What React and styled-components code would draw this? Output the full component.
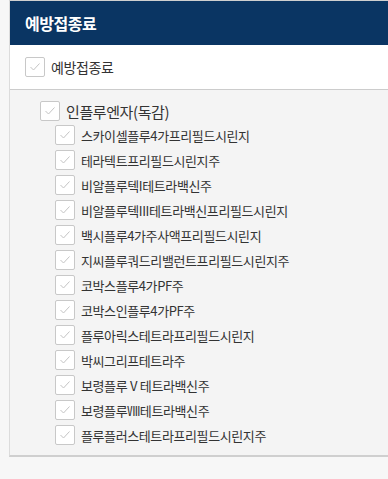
import React from 'react';
import styled, { createGlobalStyle } from 'styled-components';

const GlobalStyle = createGlobalStyle`
  html, body {
    margin: 0;
    padding: 0;
    background: #f7f7f7;
    font-family: "Noto Sans CJK KR", "Noto Sans", sans-serif;
  }
`;

const Page = styled.div`
  padding-left: 9px;
  padding-bottom: 20px;
`;

const Panel = styled.div`
  border-top: 1px solid #cfcfcf;
  border-left: 1px solid #dcdcdc;
  border-bottom: 2px solid #cfcfcf;
  background: #fff;
`;

const Header = styled.div`
  height: 44px;
  background: #0a3563;
  color: #fff;
  font-size: 16px;
  font-weight: 700;
  display: flex;
  align-items: center;
  padding-left: 15px;
  letter-spacing: -0.5px;
`;

const TopRow = styled.div`
  height: 44px;
  display: flex;
  align-items: center;
  padding-left: 15px;
  border-bottom: 1px solid #cccccc;
`;

const Tree = styled.div`
  background: #f4f4f4;
  padding: 11px 0 10px 30px;
  display: flex;
  flex-direction: column;
  gap: 4px;
`;

const Children = styled.div`
  display: flex;
  flex-direction: column;
  gap: 5px;
  padding-left: 15px;
`;

const Item = styled.label`
  display: flex;
  align-items: center;
  gap: 6px;
  height: 20px;
  color: #333;
  font-size: ${p => p.$size || 14}px;
  letter-spacing: -0.4px;
`;

const Box = styled.span`
  width: 18px;
  height: 18px;
  border: 1px solid #c8c8c8;
  border-radius: 2px;
  background: #fff;
  display: flex;
  align-items: center;
  justify-content: center;
  flex-shrink: 0;
`;

const Check = () => (
  <Box>
    <svg width="12" height="10" viewBox="0 0 12 10">
      <path d="M1.5 5 L4.5 8 L10.5 1.5" fill="none" stroke="#c4c4c4" strokeWidth="1" />
    </svg>
  </Box>
);

const vaccines = [
  '스카이셀플루4가프리필드시린지',
  '테라텍트프리필드시린지주',
  '비알플루텍I테트라백신주',
  '비알플루텍III테트라백신프리필드시린지',
  '백시플루4가주사액프리필드시린지',
  '지씨플루쿼드리밸런트프리필드시린지주',
  '코박스플루4가PF주',
  '코박스인플루4가PF주',
  '플루아릭스테트라프리필드시린지',
  '박씨그리프테트라주',
  '보령플루Ⅴ테트라백신주',
  '보령플루Ⅷ테트라백신주',
  '플루플러스테트라프리필드시린지주',
];

export default function App() {
  return (
    <Page>
      <GlobalStyle />
      <Panel>
        <Header>예방접종료</Header>
        <TopRow>
          <Item>
            <Check />
            예방접종료
          </Item>
        </TopRow>
        <Tree>
          <Item $size={15}>
            <Check />
            인플루엔자(독감)
          </Item>
          <Children>
            {vaccines.map(v => (
              <Item key={v} $size={13}>
                <Check />
                {v}
              </Item>
            ))}
          </Children>
        </Tree>
      </Panel>
    </Page>
  );
}
